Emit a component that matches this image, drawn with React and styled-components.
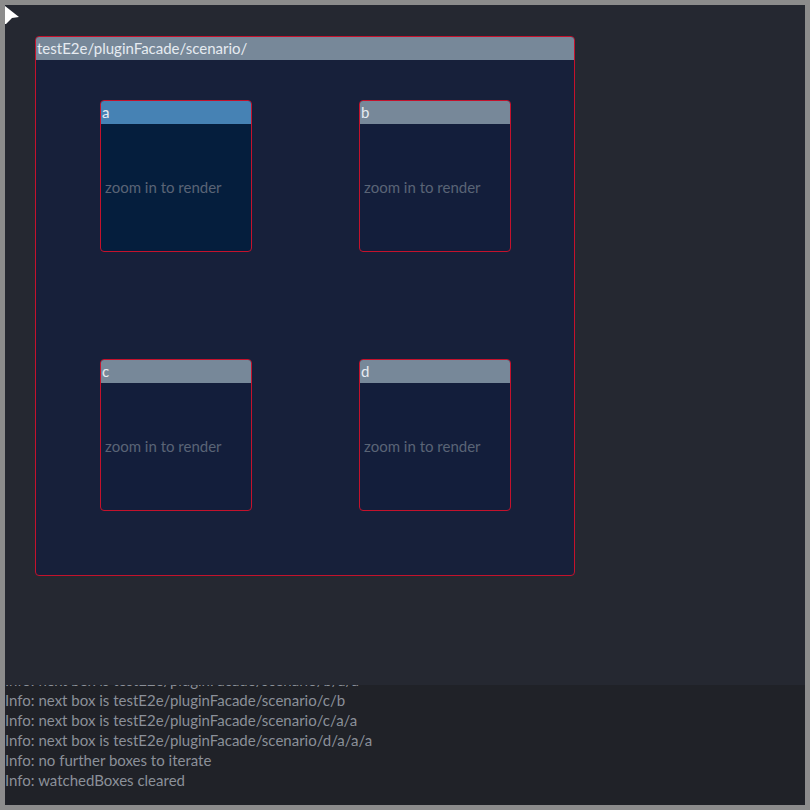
import React from "react";
import styled, { createGlobalStyle } from "styled-components";

const Global = createGlobalStyle`
  html, body {
    margin: 0;
    padding: 0;
    background: #8c8c8c;
  }
  body {
    font-family: "Source Sans Pro", Lato, "Noto Sans", sans-serif;
  }
`;

const Frame = styled.div`
  width: 810px;
  height: 810px;
  box-sizing: border-box;
  padding: 5px;
`;

const Window = styled.div`
  display: flex;
  flex-direction: column;
  width: 800px;
  height: 800px;
`;

const Canvas = styled.div`
  position: relative;
  height: 680px;
  background: #252831;
  box-sizing: border-box;
  padding: 31px 0 0 30px;
`;

const Pointer = styled.svg`
  position: absolute;
  left: 0;
  top: 0;
`;

const Box = styled.div`
  width: ${(p) => p.$size}px;
  height: ${(p) => p.$size}px;
  box-sizing: border-box;
  border: 1px solid #c4122c;
  border-radius: 4px;
  overflow: hidden;
  display: flex;
  flex-direction: column;
  background: ${(p) => p.$bg};
`;

const Header = styled.div`
  height: 23px;
  flex: none;
  background: ${(p) => (p.$active ? "#4682b4" : "#778899")};
  color: #e6ebf1;
  font-size: 15px;
  line-height: 23px;
  padding-left: 1px;
  white-space: nowrap;
`;

const OuterBody = styled.div`
  flex: 1;
  display: grid;
  grid-template-columns: 152px 152px;
  grid-auto-rows: 152px;
  column-gap: 107px;
  row-gap: 107px;
  padding: 40px 0 0 64px;
`;

const Placeholder = styled.div`
  flex: 1;
  display: flex;
  align-items: center;
  padding-left: 4px;
  padding-bottom: 2px;
  color: #5a6476;
  font-size: 15px;
`;

const Log = styled.div`
  height: 120px;
  background: #202228;
  overflow: hidden;
  display: flex;
  flex-direction: column;
  justify-content: flex-end;
  padding-bottom: 15px;
  box-sizing: border-box;
`;

const Line = styled.div`
  color: #8b9099;
  font-size: 15px;
  line-height: 20px;
  white-space: nowrap;
`;

const children = [
  { name: "a", active: true },
  { name: "b" },
  { name: "c" },
  { name: "d" },
];

const lines = [
  "Info: next box is testE2e/pluginFacade/scenario/b/a/a",
  "Info: next box is testE2e/pluginFacade/scenario/c/b",
  "Info: next box is testE2e/pluginFacade/scenario/c/a/a",
  "Info: next box is testE2e/pluginFacade/scenario/d/a/a/a",
  "Info: no further boxes to iterate",
  "Info: watchedBoxes cleared",
];

export default function App() {
  return (
    <Frame>
      <Global />
      <Window>
        <Canvas>
          <Pointer width="20" height="22" viewBox="0 0 20 22">
            <polygon points="0,1 14,12 7,13 1,19 0,19" fill="#ffffff" />
          </Pointer>
          <Box $size={540} $bg="#17203a">
            <Header>testE2e/pluginFacade/scenario/</Header>
            <OuterBody>
              {children.map((c) => (
                <Box key={c.name} $size={152} $bg={c.active ? "#051e3d" : "#131e3b"}>
                  <Header $active={c.active}>{c.name}</Header>
                  <Placeholder>zoom in to render</Placeholder>
                </Box>
              ))}
            </OuterBody>
          </Box>
        </Canvas>
        <Log>
          {lines.map((l, i) => (
            <Line key={i}>{l}</Line>
          ))}
        </Log>
      </Window>
    </Frame>
  );
}
